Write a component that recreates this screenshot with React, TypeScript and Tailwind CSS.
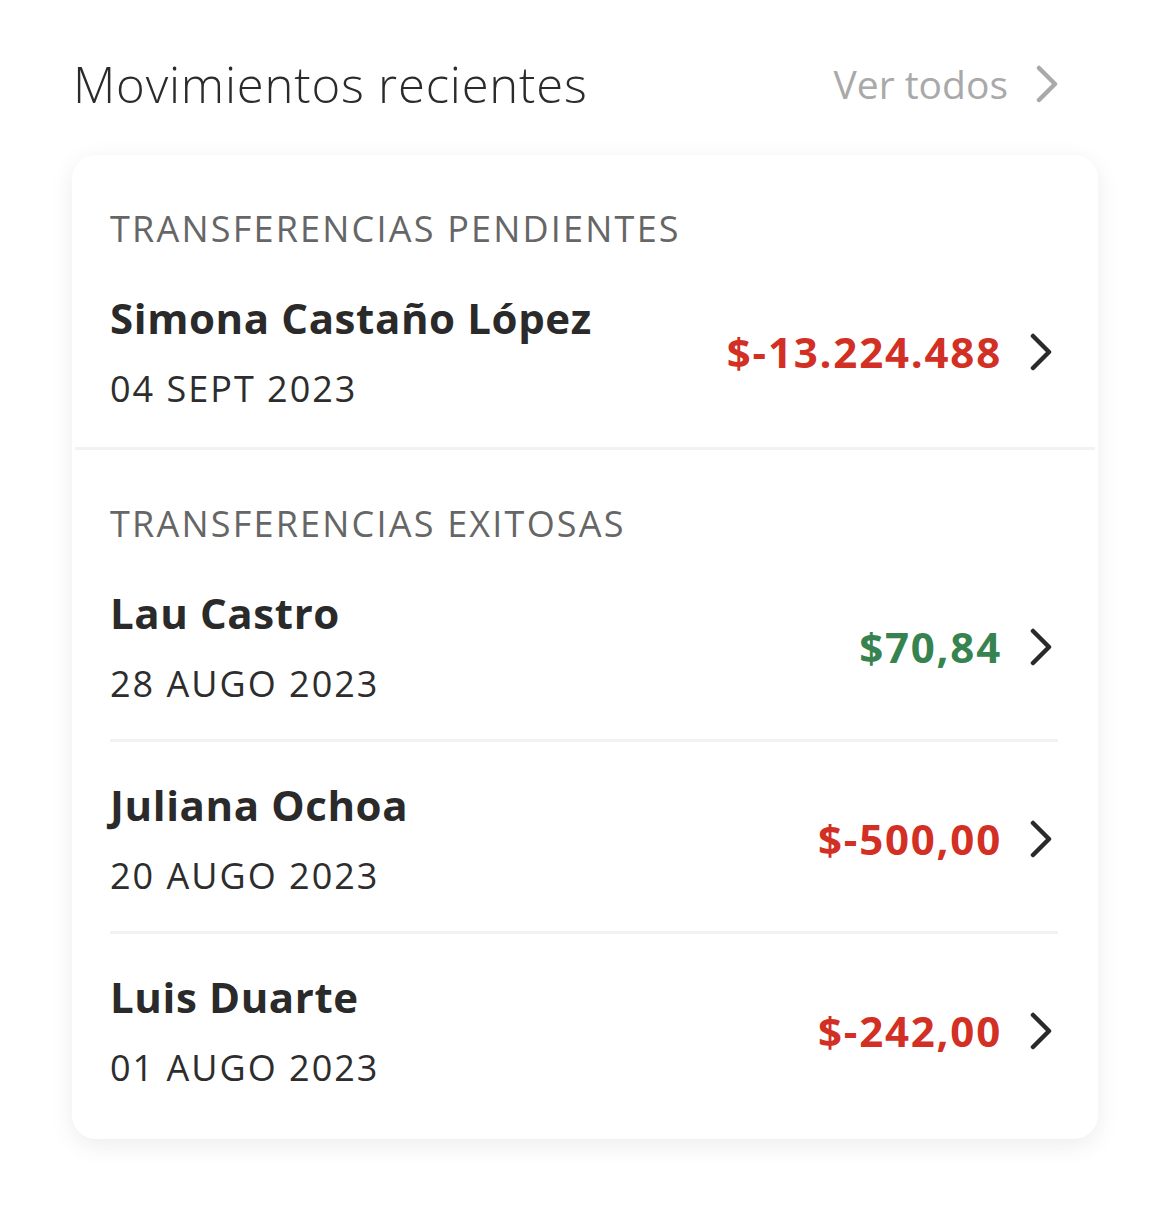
import { Fragment } from 'react';

type Movimiento = {
  nombre: string;
  fecha: string;
  monto: string;
  positivo?: boolean;
};

const pendientes: Movimiento[] = [
  { nombre: 'Simona Castaño López', fecha: '04 SEPT 2023', monto: '$-13.224.488' },
];

const exitosas: Movimiento[] = [
  { nombre: 'Lau Castro', fecha: '28 AUGO 2023', monto: '$70,84', positivo: true },
  { nombre: 'Juliana Ochoa', fecha: '20 AUGO 2023', monto: '$-500,00' },
  { nombre: 'Luis Duarte', fecha: '01 AUGO 2023', monto: '$-242,00' },
];

function Chevron({ className }: { className?: string }) {
  return (
    <svg viewBox="0 0 22 38" className={className} fill="none">
      <path
        d="M3 3 L19 19 L3 35"
        stroke="currentColor"
        strokeWidth="4.5"
        strokeLinecap="round"
        strokeLinejoin="round"
      />
    </svg>
  );
}

function Fila({ mov, pb = 'pb-[33px]' }: { mov: Movimiento; pb?: string }) {
  return (
    <div className={`flex items-center justify-between pt-[38px] ${pb}`}>
      <div>
        <p className="text-[42px] leading-[50px] font-bold tracking-[0.6px] text-[#2a2a2a]">
          {mov.nombre}
        </p>
        <p className="mt-[24px] text-[36px] leading-[44px] tracking-[2px] text-[#2d2d2d]">
          {mov.fecha}
        </p>
      </div>
      <div className="flex items-center gap-[28px]">
        <span
          className={`text-[42px] leading-[50px] font-bold tracking-[1.8px] ${
            mov.positivo ? 'text-[#37834f]' : 'text-[#d22f25]'
          }`}
        >
          {mov.monto}
        </span>
        <Chevron className="w-[22px] h-[38px] mr-[6px] text-[#2a2a2a]" />
      </div>
    </div>
  );
}

export default function App() {
  return (
    <div
      className="min-h-screen bg-white px-[72px]"
      style={{ fontFamily: '"Open Sans", "Noto Sans", sans-serif' }}
    >
      {/* Header */}
      <div className="flex items-center justify-between pt-[54px] mb-[41px]">
        <h2 className="text-[49px] leading-[60px] font-light tracking-[0.8px] text-[#2b2b2b] pl-[1px]">
          Movimientos recientes
        </h2>
        <button className="flex items-center gap-[28px] pr-[40px] text-[#a9a9a9]">
          <span className="text-[39px] leading-[48px]">Ver todos</span>
          <Chevron className="w-[22px] h-[40px]" />
        </button>
      </div>

      {/* Card */}
      <div className="rounded-[24px] bg-white shadow-[0_6px_24px_rgba(0,0,0,0.08)]">
        <div className="pl-[38px] pr-[40px] pt-[52px]">
          <p className="mb-[4px] text-[36px] leading-[44px] tracking-[2.2px] text-[#666666]">
            TRANSFERENCIAS PENDIENTES
          </p>
          {pendientes.map((m) => (
            <Fila key={m.nombre} mov={m} pb="pb-[36px]" />
          ))}
        </div>

        <div className="mx-[3px] h-[3px] bg-[#f2f2f2]" />

        <div className="pl-[38px] pr-[40px] pt-[52px]">
          <p className="mb-[4px] text-[36px] leading-[44px] tracking-[2.2px] text-[#666666]">
            TRANSFERENCIAS EXITOSAS
          </p>
          {exitosas.map((m, i) => (
            <Fragment key={m.nombre}>
              {i > 0 && <div className="h-[3px] bg-[#f2f2f2]" />}
              <Fila mov={m} pb={i === exitosas.length - 1 ? 'pb-[49px]' : 'pb-[33px]'} />
            </Fragment>
          ))}
        </div>
      </div>
    </div>
  );
}
